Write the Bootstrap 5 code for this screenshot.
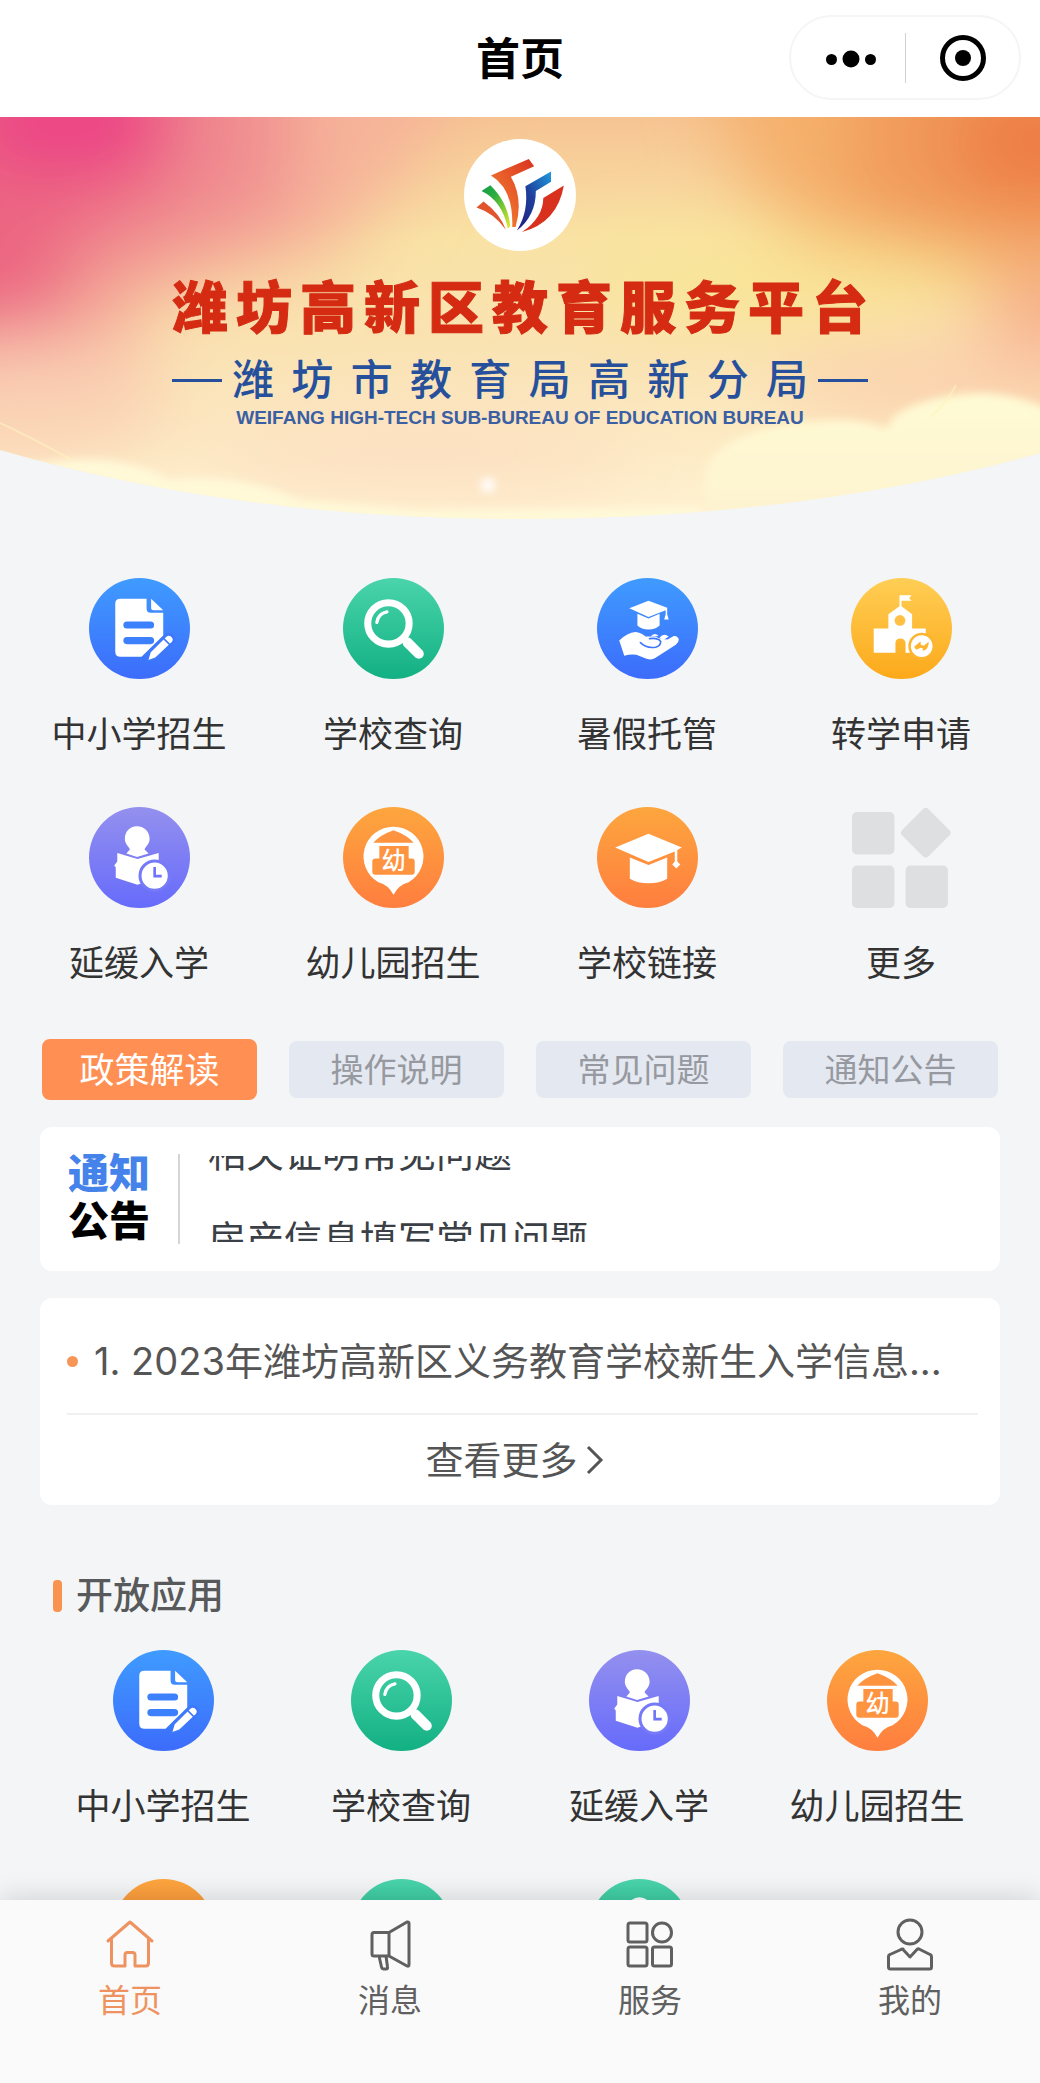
<!DOCTYPE html>
<html lang="zh-CN">
<head>
<meta charset="utf-8">
<meta name="viewport" content="width=device-width, initial-scale=1">
<title>首页</title>
<link href="https://cdn.jsdelivr.net/npm/bootstrap@5.3.0/dist/css/bootstrap.min.css" rel="stylesheet">
<style>
  body { font-family: Inter, "Noto Sans CJK SC", sans-serif; background: #f3f5f7; color: #333; }
  a { color: inherit; text-decoration: none; }
  .app-scroll { min-height: 0; overflow-y: auto; scrollbar-width: none; }
  .app-scroll::-webkit-scrollbar { display: none; }

  .top-bar { height: 117px; flex: none; }
  .top-title { font-size: 44px; line-height: 60px; font-weight: 700; color: #000; }
  .capsule { top: 15px; right: 19px; width: 232px; height: 85px; border: 2px solid #f5f5f5; border-radius: 43px; }
  .capsule button { border: 0; background: none; padding: 0; height: 50px; }
  .capsule button:first-child { padding-left: 6px; }
  .capsule button + button { border-left: 1px solid #d0d0d0; }

  .hero { height: 402px; padding-top: 22px; }
  .hero-scene { inset: 0; width: 100%; height: 100%; }
  .hero-inner { width: 696px; max-width: 92%; }
  .hero-logo { width: 112px; height: 112px; }
  .hero-title { font-size: 56px; line-height: 68px; font-weight: 900; color: #d42b12; text-align-last: justify; margin: 23px 0 0; -webkit-text-stroke: 1px #d42b12; }
  .hero-sub { font-size: 42px; line-height: 52px; color: #27509c; font-weight: 500; margin-top: 12px; gap: 10px; }
  .hero-sub .rule-line { width: 50px; height: 3px; background: #27509c; }
  .hero-sub .sub-name { flex: 1; text-align-last: justify; }
  .hero-en { font: 700 19px/24px "Liberation Sans", Arial, sans-serif; color: #3a5fa3; }

  .grid-main { padding: 59px 12px 0; row-gap: 41px; }
  .grid-open { padding: 0 44px; row-gap: 41px; }
  .app-item { height: 188px; font-size: 35px; line-height: 48px; white-space: nowrap; }
  .app-item svg { width: 101px; height: 101px; flex: none; margin-bottom: 31px; }

  .tabs-row { padding: 0 42px; gap: 32px; margin-top: 44px; height: 61px; }
  .tab-btn { flex: 1; border: 0; border-radius: 8px; height: 57px; font-size: 33px; line-height: 40px; background: #e4e8f0; color: #96999f; padding: 0; }
  .tab-btn.active { height: 61px; font-size: 35px; background: #ff8f52; color: #fff; }

  .panel { background: #fff; border-radius: 12px; margin: 0 40px; }
  .notice { margin-top: 27px; height: 144px; padding: 0 28px; }
  .notice-logo { font-size: 41px; line-height: 48px; font-weight: 900; color: #000; padding-right: 28px; padding-bottom: 4px; border-right: 2px solid #d5d5d5; height: 90px; }
  .notice-logo span:first-child { color: #4583ea; }
  .ticker { height: 86px; overflow: hidden; padding-left: 28px; font-size: 38px; line-height: 86px; color: #3b4046; }
  .ticker ul { margin-top: -46px; }

  .news { margin-top: 27px; padding: 0 22px 0 27px; color: #555; font-size: 38px; }
  .news-item { height: 117px; padding-top: 11px; gap: 16px; border-bottom: 2px solid #f0f0f0; }
  .news-dot { width: 11px; height: 11px; border-radius: 50%; background: #f79556; flex: none; }
  .news-more { height: 90px; gap: 8px; padding-right: 16px; }

  .section-head { padding-left: 53px; margin-top: 63px; height: 56px; gap: 14px; font-size: 37px; line-height: 56px; font-weight: 500; color: #58595b; margin-bottom: 26px; }
  .section-head i { width: 9px; height: 32px; border-radius: 4px; background: #f99350; }

  .bottom-nav { height: 183px; flex: none; background: #fafafa; box-shadow: 0 -4px 24px rgba(0,0,0,.13); font-size: 32px; line-height: 44px; color: #606060; z-index: 2; }
  .bottom-nav a { padding-top: 17px; }
  .bottom-nav svg { width: 54px; height: 54px; margin-bottom: 8px; fill: none; stroke: currentColor; stroke-width: 3; stroke-linejoin: round; stroke-linecap: round; }
  .bottom-nav .active { color: #ee935f; }
</style>
</head>
<body>
<svg width="0" height="0" class="position-absolute" aria-hidden="true">
  <defs>
    <linearGradient id="gBlue" x2="0" y2="1"><stop stop-color="#3f9bff"/><stop offset="1" stop-color="#3c6cfb"/></linearGradient>
    <linearGradient id="gGreen" x2="0" y2="1"><stop stop-color="#4ad4ab"/><stop offset="1" stop-color="#12b083"/></linearGradient>
    <linearGradient id="gYellow" x2="0" y2="1"><stop stop-color="#ffce55"/><stop offset="1" stop-color="#fca91a"/></linearGradient>
    <linearGradient id="gViolet" x2="0" y2="1"><stop stop-color="#9490ee"/><stop offset="1" stop-color="#666bfb"/></linearGradient>
    <linearGradient id="gOrange" x2="0" y2="1"><stop stop-color="#fda63e"/><stop offset="1" stop-color="#ff7e3f"/></linearGradient>
    <symbol id="icDoc" viewBox="0 0 100 100">
      <circle cx="50" cy="50" r="50" fill="url(#gBlue)"/>
      <path fill="#fff" d="M31 20.500H57V30Q57 34.500 61 34.500H73.500V57L52 78H31Q26 78 26 73V25.500Q26 20.500 31 20.500ZM61.500 20.500 73.500 32H64Q61.500 32 61.500 29.500Z"/>
      <path stroke="#3d80fc" stroke-width="7" stroke-linecap="round" d="M37.500 46.500H61M37.500 62H61"/>
      <path fill="#fff" stroke="#3d77fc" stroke-width="2.500" d="M57 83 60 73 75.500 57.500Q79 54 82.500 57.500 86 61 82.500 64.500L66 80Z"/>
      <path stroke="#3d77fc" stroke-width="1.500" d="M74 60 80 66"/>
    </symbol>
    <symbol id="icSearch" viewBox="0 0 100 100">
      <circle cx="50" cy="50" r="50" fill="url(#gGreen)"/>
      <circle cx="45" cy="45" r="20.500" fill="none" stroke="#fff" stroke-width="7"/>
      <path d="M33.500 44Q35 35 43.500 33.500" fill="none" stroke="#fff" stroke-width="3.200" stroke-linecap="round"/>
      <path d="M60 60 64 64" stroke="#fff" stroke-width="7"/><path d="M64 64 75 75" stroke="#fff" stroke-width="10" stroke-linecap="round"/>
    </symbol>
    <symbol id="icCare" viewBox="0 0 100 100">
      <circle cx="50" cy="50" r="50" fill="url(#gBlue)"/>
      <path fill="#fff" d="M32 30 51 22.500 69.500 29.500V36L71 41H66.500L68 36V32L51 38.500ZM40 35.500 51 40 62 35.500V47Q58 51 51 51T40 47Z"/>
      <path fill="#fff" d="M22 62Q30 54 38 53.500 44 54 48 58L58 58Q62 61 70 61L76 57.500Q80 57 81 61 81 64 78 66L58 79Q54 82 49 80L39 76Q33 75 27 77Z"/>
      <path fill="none" stroke="#3d77fc" stroke-width="1.600" stroke-linecap="round" d="M43 64Q49 70 58 68.500 63 67 63 63 61 59 52 60"/>
      <path fill="#fff" d="M53 58Q57 53 61 57.500ZM62 59Q66 54 71 58L65 62Z"/>
    </symbol>
    <symbol id="icSchool" viewBox="0 0 100 100">
      <circle cx="50" cy="50" r="50" fill="url(#gYellow)"/>
      <path fill="#fff" d="M48 17H60L57.500 20 60 22.500H50V28L60.500 36V50H74V74H54V64Q53 60 49 60 44.500 60 44 64V74H22.500V50H37V36L48 28Z"/>
      <circle cx="48.500" cy="42" r="5.300" fill="#ffc043"/>
      <circle cx="70" cy="67.500" r="12" fill="#fff" stroke="#fdb430" stroke-width="2.500"/>
      <path fill="#fdb430" d="M62.500 68 69 62.500V66L72 67 77 63Q77 71 71 72V69.500L69 69 64.500 71Z"/>
    </symbol>
    <symbol id="icDelay" viewBox="0 0 100 100">
      <circle cx="50" cy="50" r="50" fill="url(#gViolet)"/>
      <path fill="#fff" d="M47.500 19C55 19 60 24.500 60 31.500 60 37 56 39 55 42L59 46 47.500 49.500 37 46 40.500 42C39.500 39 35.500 37 35.500 31.500 35.500 24.500 40 19 47.500 19Z"/>
      <path fill="#fff" d="M28 45.500 48 51.500 69 45.500V70L48 77 26.500 70V60L25 58 28 54Z"/>
      <circle cx="65" cy="68" r="14.500" fill="#fff" stroke="#7679f8" stroke-width="3"/>
      <path fill="none" stroke="#6f73fa" stroke-width="2.600" d="M65 59.500V68.500H72"/>
    </symbol>
    <symbol id="icKinder" viewBox="0 0 100 100">
      <circle cx="50" cy="50" r="50" fill="url(#gOrange)"/>
      <path fill="#fff" d="M50 19.500A29.500 29.500 0 0 1 65 74.500Q55 77 50 87 45 77 35 74.500A29.500 29.500 0 0 1 50 19.500Z"/>
      <path fill="#fe9440" d="M30 35.500Q36 28 50 23 64 28 70 35.500ZM36 38.500H65V51H68Q71 51 71 54V64Q71 67 68 67H32Q29 67 29 64V54Q29 51 32 51H36Z"/>
      <text x="50" y="61" text-anchor="middle" fill="#fff" font-size="24" font-weight="500">幼</text>
    </symbol>
    <symbol id="icCap" viewBox="0 0 100 100">
      <circle cx="50" cy="50" r="50" fill="url(#gOrange)"/>
      <path fill="#fff" d="M18 40 51 26.500 84 40 79.500 42.500V54L82.500 57 78.500 61 74.500 57 77 54V44L51 54.500ZM32.500 50 51 57.500 69.500 50V71Q62 75.500 51 75.500T32.500 71Z"/>
    </symbol>
    <symbol id="icMore" viewBox="0 0 100 100" overflow="visible">
      <g fill="#dedfe0"><rect x="1" y="5" width="42" height="42" rx="5"/><rect x="1" y="58" width="42" height="42" rx="5"/><rect x="54" y="58" width="42" height="42" rx="5"/><rect x="55.500" y="7" width="37" height="37" rx="4" transform="rotate(45 74 25.500)"/></g>
    </symbol>
    <symbol id="icGreenDot" viewBox="0 0 100 100"><circle cx="50" cy="50" r="50" fill="url(#gGreen)"/></symbol>
    <symbol id="icGreenPin" viewBox="0 0 100 100"><circle cx="50" cy="50" r="50" fill="url(#gGreen)"/><circle cx="50" cy="30" r="12" fill="#fff"/></symbol>
    <symbol id="icOrangeDot" viewBox="0 0 100 100"><circle cx="50" cy="50" r="50" fill="url(#gOrange)"/></symbol>
  </defs>
</svg>

<div class="vh-100 d-flex flex-column overflow-hidden">
  <header class="top-bar bg-white position-relative d-flex align-items-center justify-content-center">
    <h1 class="top-title m-0">首页</h1>
    <div class="capsule position-absolute d-flex align-items-center bg-white">
      <button type="button" class="w-50" aria-label="菜单"><svg width="50" height="18" viewBox="0 0 50 18"><circle cx="5.500" cy="9.500" r="5.500"/><circle cx="25" cy="9" r="8.500"/><circle cx="44.500" cy="9.500" r="5.500"/></svg></button>
      <button type="button" class="w-50" aria-label="关闭"><svg width="48" height="48" viewBox="0 0 48 48"><circle cx="24" cy="24" r="20.500" fill="none" stroke="#000" stroke-width="5"/><circle cx="24" cy="24" r="8"/></svg></button>
    </div>
  </header>

  <main class="app-scroll flex-grow-1">
    <section class="hero position-relative d-flex flex-column align-items-center">
      <svg class="hero-scene position-absolute" viewBox="0 0 1040 402" preserveAspectRatio="none" aria-hidden="true">
        <defs>
          <clipPath id="curve"><path d="M0 0H1040V336Q800 402 520 402T0 333Z"/></clipPath>
          <linearGradient id="sky" x2="0" y2="1"><stop stop-color="#f6c493"/><stop offset=".3" stop-color="#f9e2a4"/><stop offset=".6" stop-color="#faE3b4"/><stop offset="1" stop-color="#fff1d2"/></linearGradient>
          <filter id="soft" x="-50%" y="-50%" width="200%" height="200%"><feGaussianBlur stdDeviation="36"/></filter>
          <filter id="haze" x="-50%" y="-50%" width="200%" height="200%"><feGaussianBlur stdDeviation="4"/></filter>
          <linearGradient id="cloud" x2="0" y2="1"><stop stop-color="#fefbd4"/><stop offset="1" stop-color="#fef1cf"/></linearGradient>
        </defs>
        <g clip-path="url(#curve)">
          <rect width="1040" height="402" fill="url(#sky)"/>
          <g filter="url(#soft)">
            <path fill="#f6b29a" d="M-120-120H500L400 60 330 140 150 180 110 320H-120Z"/>
            <path fill="#f08c90" d="M-120-120H290L290 90 180 140 90 170 60 270H-120Z"/>
            <path fill="#ec6682" d="M-120-120H190L170 70 70 120 50 200-10 270H-120Z"/>
            <ellipse cx="70" cy="5" rx="110" ry="50" fill="#ec3f86"/>
            <path fill="#f5b06c" d="M700-120H1160V140L960 160 830 140 740 60Z"/>
            <path fill="#f19a5c" d="M860-120H1160V130L920 130 850 90Z"/>
            <ellipse cx="1040" cy="25" rx="90" ry="60" fill="#ee7c42"/>
            <ellipse cx="780" cy="165" rx="200" ry="40" fill="#f9e595"/>
            <ellipse cx="1060" cy="205" rx="80" ry="50" fill="#f6ac86"/>
            <ellipse cx="20" cy="280" rx="150" ry="60" fill="#fad0b4"/>
            <ellipse cx="960" cy="265" rx="180" ry="40" fill="#fbd0ad"/>
            <ellipse cx="420" cy="335" rx="220" ry="30" fill="#fcdcc0"/>
          </g>
          <path filter="url(#haze)" fill="url(#cloud)" d="M704 420V362C706 326 760 306 820 304Q860 300 888 312C890 288 950 276 980 276Q1020 276 1060 298V420Z"/>
          <path filter="url(#haze)" fill="#fff9d8" d="M-20 350 50 345Q120 335 170 363 240 355 300 383L420 393 560 392 700 390V430H-20Z"/>
          <path fill="none" stroke="#fff4bf" stroke-width="2" opacity=".6" d="M930 300Q946 288 956 268M0 306Q30 320 70 342"/>
          <ellipse cx="488" cy="368" rx="7" ry="7" fill="#fff" filter="url(#haze)"/>
        </g>
      </svg>
      <svg class="hero-logo position-relative" viewBox="0 0 332 332" role="img" aria-label="潍坊教育">
        <defs>
          <linearGradient id="l1" x1="1" y1="0" x2="0" y2="1"><stop stop-color="#d9321f"/><stop offset="1" stop-color="#f88a35"/></linearGradient>
          <linearGradient id="l2" x2="1" y2="1"><stop stop-color="#0c9a48"/><stop offset=".35" stop-color="#2fae3e"/><stop offset="1" stop-color="#e8ea2a"/></linearGradient>
          <linearGradient id="l3" x1="1" y1="0" x2="0" y2="1"><stop stop-color="#1d9bdc"/><stop offset=".5" stop-color="#1f3f9c"/><stop offset="1" stop-color="#1f1c80"/></linearGradient>
        </defs>
        <circle cx="166" cy="166" r="166" fill="#fff"/>
        <g transform="translate(-75 -57)">
          <path fill="url(#l1)" d="M155 165 267 116 283 138 214 169Q252 235 228 318H218Q222 205 155 165Z"/>
          <path fill="url(#l2)" d="M127 211 153 194Q206 245 212 316L205 322Q188 240 127 211Z"/>
          <path fill="#e2542d" d="M112 260 133 242Q182 278 199 326 165 277 112 260Z"/>
          <path fill="url(#l3)" d="M257 197 333 153V184L288 211Q288 285 232 328 268 270 257 197Z"/>
          <path fill="#d8321f" d="M310 232 371 195Q352 305 247 333 310 290 310 232Z"/>
        </g>
      </svg>
      <div class="hero-inner position-relative text-center">
        <h2 class="hero-title">潍坊高新区教育服务平台</h2>
        <div class="hero-sub d-flex align-items-center"><span class="rule-line"></span><span class="sub-name">潍坊市教育局高新分局</span><span class="rule-line"></span></div>
        <div class="hero-en">WEIFANG HIGH-TECH SUB-BUREAU OF EDUCATION BUREAU</div>
      </div>
    </section>

    <nav class="grid-main row g-0" aria-label="服务">
      <a href="#" class="app-item col-3 d-flex flex-column align-items-center"><svg><use href="#icDoc"/></svg>中小学招生</a>
      <a href="#" class="app-item col-3 d-flex flex-column align-items-center"><svg><use href="#icSearch"/></svg>学校查询</a>
      <a href="#" class="app-item col-3 d-flex flex-column align-items-center"><svg><use href="#icCare"/></svg>暑假托管</a>
      <a href="#" class="app-item col-3 d-flex flex-column align-items-center"><svg><use href="#icSchool"/></svg>转学申请</a>
      <a href="#" class="app-item col-3 d-flex flex-column align-items-center"><svg><use href="#icDelay"/></svg>延缓入学</a>
      <a href="#" class="app-item col-3 d-flex flex-column align-items-center"><svg><use href="#icKinder"/></svg>幼儿园招生</a>
      <a href="#" class="app-item col-3 d-flex flex-column align-items-center"><svg><use href="#icCap"/></svg>学校链接</a>
      <a href="#" class="app-item col-3 d-flex flex-column align-items-center"><svg><use href="#icMore"/></svg>更多</a>
    </nav>

    <div class="tabs-row d-flex align-items-center">
      <button type="button" class="tab-btn active">政策解读</button>
      <button type="button" class="tab-btn">操作说明</button>
      <button type="button" class="tab-btn">常见问题</button>
      <button type="button" class="tab-btn">通知公告</button>
    </div>

    <section class="panel notice d-flex align-items-center">
      <div class="notice-logo d-flex flex-column justify-content-center"><span>通知</span><span>公告</span></div>
      <div class="ticker flex-grow-1"><ul class="list-unstyled mb-0"><li>相关证明常见问题</li><li>房产信息填写常见问题</li></ul></div>
    </section>

    <section class="panel news">
      <a href="#" class="news-item d-flex align-items-center"><span class="news-dot"></span><span class="text-truncate">1. 2023年潍坊高新区义务教育学校新生入学信息...</span></a>
      <a href="#" class="news-more d-flex align-items-center justify-content-center">查看更多<svg width="18" height="30" viewBox="0 0 18 30" fill="none" stroke="#555" stroke-width="3"><path d="M2 2 15 15 2 28"/></svg></a>
    </section>

    <h3 class="section-head d-flex align-items-center"><i></i>开放应用</h3>
    <nav class="grid-open row g-0" aria-label="开放应用">
      <a href="#" class="app-item col-3 d-flex flex-column align-items-center"><svg><use href="#icDoc"/></svg>中小学招生</a>
      <a href="#" class="app-item col-3 d-flex flex-column align-items-center"><svg><use href="#icSearch"/></svg>学校查询</a>
      <a href="#" class="app-item col-3 d-flex flex-column align-items-center"><svg><use href="#icDelay"/></svg>延缓入学</a>
      <a href="#" class="app-item col-3 d-flex flex-column align-items-center"><svg><use href="#icKinder"/></svg>幼儿园招生</a>
      <a href="#" class="app-item col-3 d-flex flex-column align-items-center"><svg><use href="#icOrangeDot"/></svg></a>
      <a href="#" class="app-item col-3 d-flex flex-column align-items-center"><svg><use href="#icGreenDot"/></svg></a>
      <a href="#" class="app-item col-3 d-flex flex-column align-items-center"><svg><use href="#icGreenPin"/></svg></a>
    </nav>
  </main>

  <nav class="bottom-nav d-flex" aria-label="主导航">
    <a href="#" class="active col-3 d-flex flex-column align-items-center"><svg viewBox="0 0 54 54"><path d="M5 24 27 5 49 24M8.500 22V46Q8.500 49 11.500 49H22V38Q22 35.500 24.500 35.500H29.500Q32 35.500 32 38V49H42.500Q45.500 49 45.500 46V22"/></svg>首页</a>
    <a href="#" class="col-3 d-flex flex-column align-items-center"><svg viewBox="0 0 54 54"><path d="M26 15.500H11Q9 15.500 9 17.500V37Q9 39 11 39H26ZM26 15.500 44 5Q46 4.500 46 6.500V47.500Q46 50 44 49L26 39M16 39 18.500 50Q19 52 21 52H23Q25 52 24.500 50L23 39"/></svg>消息</a>
    <a href="#" class="col-3 d-flex flex-column align-items-center"><svg viewBox="0 0 54 54"><rect x="5" y="6" width="19" height="19" rx="2"/><circle cx="39" cy="15.500" r="9.500"/><rect x="5" y="30" width="19" height="19" rx="2"/><rect x="29.500" y="30" width="19" height="19" rx="2"/></svg>服务</a>
    <a href="#" class="col-3 d-flex flex-column align-items-center"><svg viewBox="0 0 54 54"><circle cx="27" cy="15" r="12"/><path d="M20 32Q18.500 32 17 33L7 37.500Q5.500 38 5.500 39.500V50Q5.500 52 7.500 52H46.500Q48.500 52 48.500 50V39.500Q48.500 38 47 37.500L36 32Q34.500 31.500 33.500 33L27 40 20.500 33Z"/></svg>我的</a>
  </nav>
</div>
<script src="https://cdn.jsdelivr.net/npm/bootstrap@5.3.0/dist/js/bootstrap.bundle.min.js"></script>
</body>
</html>
